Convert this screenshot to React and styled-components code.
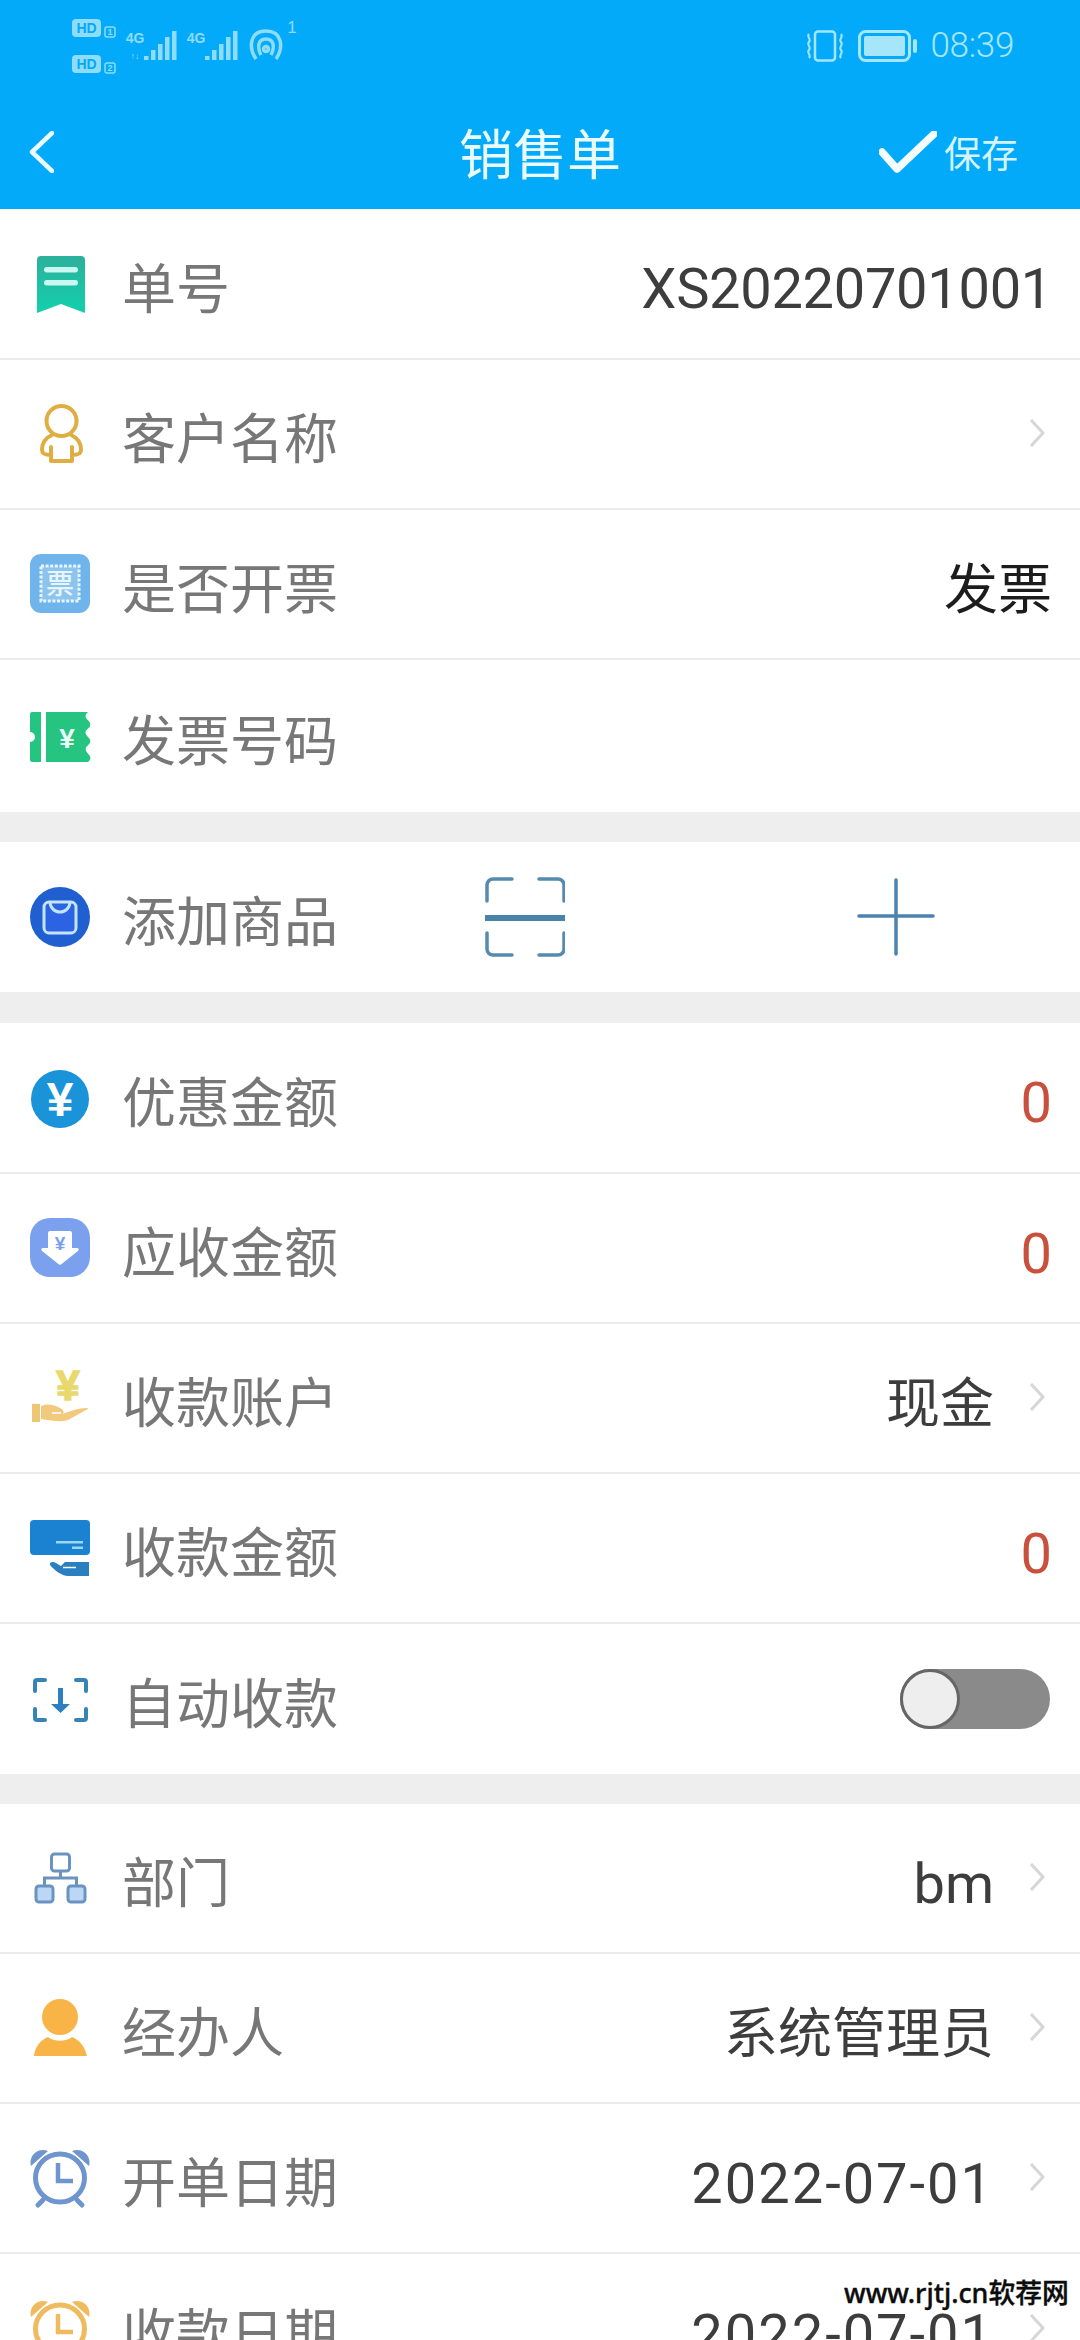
import React from 'react';
import styled, { createGlobalStyle } from 'styled-components';

const CJK = '"Noto Sans CJK SC", "Noto Sans", sans-serif';
const LATIN = 'Roboto, "Noto Sans CJK SC", sans-serif';

const Global = createGlobalStyle`
  html, body { margin: 0; padding: 0; background: #fff; }
  body { font-family: ${CJK}; }
`;

const Page = styled.div`
  position: relative;
  width: 1080px;
  height: 2340px;
  overflow: hidden;
  background: #eeeeee;
`;

const Header = styled.header`
  height: 209px;
  background: #02aaf9;
  display: flex;
  flex-direction: column;
`;

const StatusBar = styled.div`
  height: 90px;
  padding: 19px 66px 0 72px;
  box-sizing: border-box;
  display: flex;
  justify-content: space-between;
  align-items: flex-start;
`;

const StatusRight = styled.div`
  display: flex;
  align-items: center;
  gap: 12px;
  padding-top: 11px;
`;

const Clock = styled.span`
  font-family: Roboto, sans-serif;
  font-size: 35px;
  font-weight: 300;
  letter-spacing: -0.3px;
  line-height: 32px;
  color: #a5e6fa;
`;

const NavBar = styled.div`
  flex: 1;
  display: grid;
  grid-template-columns: 1fr auto 1fr;
  align-items: center;
  padding: 4px 29px 0;
`;

const Title = styled.h1`
  margin: 0;
  font-size: 54px;
  font-weight: 400;
  line-height: 64px;
  color: #e9fbff;
`;

const SaveAction = styled.div`
  justify-self: end;
  margin-right: 33px;
  display: flex;
  align-items: center;
  gap: 7px;
`;

const SaveLabel = styled.span`
  font-size: 37px;
  line-height: 44px;
  color: #d5f4fd;
`;

const Section = styled.section`
  margin-bottom: ${p => p.$gap || 30}px;
  background: #fff;
`;

const Row = styled.div`
  height: ${p => p.$h || 150}px;
  box-sizing: border-box;
  padding: 0 28px 0 30px;
  display: flex;
  align-items: center;
  background: #fff;
  border-bottom: 2px solid #ebebeb;
  &:last-child { border-bottom: none; }
`;

const IconCell = styled.span`
  flex: none;
  width: 60px;
  height: 60px;
  margin-right: 32px;
  display: block;
  svg { display: block; overflow: visible; }
`;

const Label = styled.span`
  font-size: 54px;
  line-height: 64px;
  color: #777777;
  padding-top: 4px;
`;

const Value = styled.span`
  margin-left: auto;
  font-family: ${p => (p.$latin ? LATIN : CJK)};
  font-size: ${p => (p.$latin ? 56 : 54)}px;
  letter-spacing: ${p => p.$spacing || 0}px;
  line-height: 64px;
  color: ${p => p.$color || '#3d3d3d'};
  padding-top: ${p => (p.$latin ? 11 : 4)}px;
`;

const Chevron = styled.svg`
  flex: none;
  width: 16px;
  height: 28px;
  margin-left: 35px;
  margin-right: 7px;
  margin-top: -2px;
`;

const ActionGroup = styled.div`
  margin-left: 147px;
  display: flex;
  align-items: center;
  gap: 292px;
`;

const Toggle = styled.span`
  position: relative;
  margin-left: auto;
  margin-right: 2px;
  width: 150px;
  height: 60px;
  border-radius: 30px;
  background: #8a8a8a;
`;

const Knob = styled.span`
  position: absolute;
  left: 0;
  top: 0;
  width: 60px;
  height: 60px;
  box-sizing: border-box;
  border-radius: 50%;
  border: 3px solid #666666;
  background: #eeeeee;
`;

const Watermark = styled.div`
  position: absolute;
  left: 844px;
  top: 2275px;
  font-family: "Noto Sans", "Noto Sans CJK SC", sans-serif;
  font-size: 26.8px;
  font-weight: 500;
  line-height: 36px;
  color: #0c0c0c;
  -webkit-text-stroke: 0.4px #0c0c0c;
  white-space: nowrap;
`;

const ICON_TEXT = 'Liberation Sans, Arial, sans-serif';

const Bookmark = () => (
  <svg width="60" height="60" viewBox="0 0 60 60">
    <defs>
      <linearGradient id="bm" x1="0" y1="0" x2="0" y2="1">
        <stop offset="0" stopColor="#2cb09c" />
        <stop offset="1" stopColor="#12d0ad" />
      </linearGradient>
    </defs>
    <path d="M7 6a4 4 0 0 1 4-4h40a4 4 0 0 1 4 4v53L31 50 7 59z" fill="url(#bm)" />
    <rect x="14" y="13" width="34" height="5.5" rx="2.7" fill="#c8f8f0" />
    <rect x="14" y="26" width="34" height="5.5" rx="2.7" fill="#c8f8f0" />
  </svg>
);

const UserOutline = () => (
  <svg width="60" height="60" viewBox="0 0 60 60" fill="none" stroke="#dfae42" strokeWidth="4" strokeLinejoin="round" strokeLinecap="round">
    <ellipse cx="31.500" cy="17" rx="15" ry="15" />
    <path d="M22 31C15 34 12 40 12 46c0 4 3 5 9 5M41 31c7 3 10 9 10 15 0 4-3 5-9 5M21 43v14h21V43" />
  </svg>
);

const InvoiceStamp = () => (
  <svg width="60" height="60" viewBox="0 0 60 60">
    <rect x="0" y="0" width="60" height="59" rx="11" fill="#6fb5ec" />
    <rect x="11" y="12" width="38" height="35" fill="#8cc4ee" stroke="#e6f5ff" strokeWidth="3" strokeDasharray="3 1.600" />
    <text x="30" y="40" textAnchor="middle" fontFamily={CJK} fontSize="28" fontWeight="500" fill="#e6f5ff">票</text>
  </svg>
);

const Ticket = () => (
  <svg width="60" height="60" viewBox="0 0 60 60">
    <path d="M2 6h9v50H2a2 2 0 0 1-2-2V36a5 5 0 0 0 0-10V8a2 2 0 0 1 2-2z" fill="#25c481" />
    <path d="M16 6h42q-5 4 0 8.300t0 8.300 0 8.400 0 8.300 0 8.400 0 8.300H16z" fill="#25c481" />
    <text x="37" y="42" textAnchor="middle" fontFamily={ICON_TEXT} fontSize="28" fontWeight="700" fill="#e9fff5">¥</text>
  </svg>
);

const BagCircle = () => (
  <svg width="60" height="60" viewBox="0 0 60 60">
    <circle cx="30" cy="30" r="30" fill="#1f5fd0" />
    <rect x="14" y="15" width="32" height="31" rx="5" fill="#2b63e2" stroke="#c3e4ff" strokeWidth="3" />
    <path d="M20 15a10 10 0 0 0 20 0" fill="none" stroke="#c3e4ff" strokeWidth="3" />
  </svg>
);

const YenCoin = () => (
  <svg width="60" height="60" viewBox="0 0 60 60">
    <circle cx="30" cy="31" r="29" fill="#1a93d8" />
    <text x="30" y="48" textAnchor="middle" fontFamily={ICON_TEXT} fontSize="48" fontWeight="700" fill="#fff">¥</text>
  </svg>
);

const ReceiveBadge = () => (
  <svg width="60" height="60" viewBox="0 0 60 60">
    <rect x="0" y="0" width="60" height="59" rx="20" fill="#7aa0ee" />
    <path d="M20 13h20a2 2 0 0 1 2 2v15h5c2 0 2 2 1 3L31 46.500a2 2 0 0 1-2 0L12 33c-1-1-1-3 1-3h5V15a2 2 0 0 1 2-2z" fill="#fff" />
    <text x="30" y="32" textAnchor="middle" fontFamily={ICON_TEXT} fontSize="19" fontWeight="700" fill="#7aa0ee">¥</text>
  </svg>
);

const HandYen = () => (
  <svg width="60" height="60" viewBox="0 0 60 60">
    <text x="38" y="32" textAnchor="middle" fontFamily={ICON_TEXT} fontSize="42" fontWeight="700" fill="#e9d96c" stroke="#e9d96c" strokeWidth="1.500">¥</text>
    <rect x="2" y="36" width="8" height="18" fill="#efc674" />
    <path d="M11 38c8-3 13-1 19 2 4 2 5 5 2 6l12-4c7-2 15-3 14-1L38 52c-8 3-18 0-27-1z" fill="#f1ca7e" />
    <path d="M22 45h9" stroke="#fff" strokeWidth="1.500" />
  </svg>
);

const CardHand = () => (
  <svg width="60" height="60" viewBox="0 0 60 60">
    <rect x="0" y="2" width="60" height="35" rx="4" fill="#1a82d0" />
    <rect x="26" y="23" width="27" height="2.500" fill="#9ad8f2" />
    <rect x="42" y="28.500" width="11" height="2.500" fill="#9ad8f2" />
    <path d="M20 47c-1-3 3-4 6-2l5 3 4-4h24v14H38c-6 0-14-6-18-11z" fill="#2a7fc0" />
    <path d="M33 49.500h13" stroke="#fff" strokeWidth="1.500" />
  </svg>
);

const ScanDown = () => (
  <svg width="60" height="60" viewBox="0 0 60 60">
    <g fill="none" stroke="#3584b5" strokeWidth="4" strokeLinecap="round">
      <path d="M15 11H7a2 2 0 0 0-2 2v9M46 11h8a2 2 0 0 1 2 2v9M15 51H7a2 2 0 0 1-2-2v-9M46 51h8a2 2 0 0 0 2-2v-9" />
    </g>
    <path d="M28 19h5v16h7L30.500 44 21 35h7z" fill="#2a80c0" />
  </svg>
);

const OrgChart = () => (
  <svg width="60" height="60" viewBox="0 0 60 60" stroke="#6a93bd" strokeWidth="3" fill="none">
    <rect x="21.500" y="6" width="18" height="17" rx="3" />
    <path d="M30.500 23v7M14.500 38v-8h32v8" />
    <rect x="6" y="38" width="17" height="16" rx="3" fill="#bcd6f8" />
    <rect x="38" y="38" width="17" height="16" rx="3" fill="#bcd6f8" />
  </svg>
);

const PersonSolid = () => (
  <svg width="60" height="60" viewBox="0 0 60 60" fill="#f8b446">
    <circle cx="30" cy="19" r="18" />
    <path d="M4 58c1-10 8-17 14-19 6 5 18 5 24 0 6 2 13 9 15 19z" />
  </svg>
);

const AlarmClock = ({ color }) => (
  <svg width="60" height="60" viewBox="0 0 60 60" fill="none" stroke={color}>
    <ellipse cx="30" cy="30" rx="24.500" ry="24" strokeWidth="5" />
    <path d="M1 18C-2 8 8-1 18 3z" fill={color} stroke="none" />
    <path d="M59 18C62 8 52-1 42 3z" fill={color} stroke="none" />
    <path d="M13 52l-5 5M47 52l5 5" strokeWidth="5" strokeLinecap="round" />
    <path d="M28 15v18h15" strokeWidth="4.500" />
  </svg>
);

const ScanIcon = () => (
  <svg width="80" height="80" viewBox="0 0 80 80" fill="none" stroke="#568bad" strokeWidth="3.500" strokeLinecap="round">
    <path d="M27 2H8a6 6 0 0 0-6 6v16M54 2h19a6 6 0 0 1 6 6v16M27 78H8a6 6 0 0 1-6-6V56M54 78h19a6 6 0 0 0 6-6V56" />
    <rect x="0" y="38" width="80" height="6" fill="#4a82a8" stroke="none" />
  </svg>
);

const PlusIcon = () => (
  <svg width="78" height="78" viewBox="0 0 78 78" fill="none" stroke="#4a83ad" strokeWidth="3.500" strokeLinecap="round">
    <path d="M39 2v74M2 38h74" />
  </svg>
);

const More = () => (
  <Chevron viewBox="0 0 16 28" fill="none" stroke="#d6d6d6" strokeWidth="3">
    <path d="M2 1l12 13L2 27" />
  </Chevron>
);

const StatusLeft = () => (
  <svg width="226" height="56" viewBox="72 19 226 56">
    <g fill="#8fdcf9" stroke="none">
      <rect x="72" y="19" width="29" height="18" rx="4" />
      <rect x="72" y="55" width="29" height="18" rx="4" />
      <rect x="105" y="27" width="10" height="10" rx="2" fill="none" stroke="#8fdcf9" strokeWidth="1.500" />
      <rect x="105" y="63" width="10" height="10" rx="2" fill="none" stroke="#8fdcf9" strokeWidth="1.500" />
      <rect x="144" y="56" width="4.500" height="4" />
      <rect x="151" y="50" width="4.500" height="10" />
      <rect x="158" y="44" width="4.500" height="16" />
      <rect x="165" y="37" width="4.500" height="23" />
      <rect x="172" y="31" width="4.500" height="29" />
      <rect x="205" y="56" width="4.500" height="4" />
      <rect x="212" y="50" width="4.500" height="10" />
      <rect x="219" y="44" width="4.500" height="16" />
      <rect x="226" y="37" width="4.500" height="23" />
      <rect x="233" y="31" width="4.500" height="29" />
    </g>
    <g fontFamily={ICON_TEXT} fontWeight="700" textAnchor="middle" fill="#02aaf9">
      <text x="86.500" y="33" fontSize="14">HD</text>
      <text x="86.500" y="69" fontSize="14">HD</text>
    </g>
    <g fontFamily={ICON_TEXT} textAnchor="middle" fill="#8fdcf9" fontWeight="700">
      <text x="110" y="35" fontSize="9">1</text>
      <text x="110" y="71" fontSize="9">2</text>
      <text x="135" y="43" fontSize="14">4G</text>
      <text x="196" y="43" fontSize="14">4G</text>
      <text x="135" y="59" fontSize="9" fontWeight="400">↑↓</text>
      <text x="292" y="33" fontSize="17" fontWeight="400">1</text>
    </g>
    <g fill="none" stroke="#8fdcf9" strokeWidth="3.500">
      <path d="M256 59c-8-12-6-28 10-28s18 16 10 28" />
      <path d="M261 55c-4-8-3-16 5-16s9 8 5 16" />
      <circle cx="266" cy="49" r="2.500" />
    </g>
  </svg>
);

const Vibrate = () => (
  <svg width="42" height="32" viewBox="0 0 42 32" fill="none" stroke="#a5e6fa" strokeWidth="2.500">
    <rect x="11" y="1.500" width="20" height="29" rx="3" />
    <path d="M5 4c-3 3 3 5 0 8s3 5 0 8 3 5 0 8M37 4c3 3-3 5 0 8s-3 5 0 8-3 5 0 8" strokeWidth="2" />
  </svg>
);

const Battery = () => (
  <svg width="60" height="32" viewBox="0 0 60 32">
    <rect x="1.500" y="1.500" width="50" height="29" rx="6" fill="none" stroke="#a5e6fa" strokeWidth="3" />
    <rect x="6" y="6" width="41" height="20" rx="2" fill="#a5e6fa" />
    <rect x="55" y="9" width="4" height="14" rx="2" fill="#a5e6fa" />
  </svg>
);

const BackArrow = () => (
  <svg width="25" height="42" viewBox="0 0 25 42" fill="none" stroke="#e9fbff" strokeWidth="4.500" strokeLinecap="round" strokeLinejoin="round" style={{ display: 'block' }}>
    <path d="M23 2L3 21l20 19" />
  </svg>
);

const Check = () => (
  <svg width="58" height="42" viewBox="0 0 58 42" fill="none" stroke="#f4fdff" strokeWidth="7.500" strokeLinejoin="round" strokeLinecap="round" style={{ display: 'block' }}>
    <path d="M3 21l15 17L55 3" />
  </svg>
);

const RED = '#c8503c';

export default function App() {
  return (
    <Page>
      <Global />
      <Header>
        <StatusBar>
          <StatusLeft />
          <StatusRight>
            <Vibrate />
            <Battery />
            <Clock>08:39</Clock>
          </StatusRight>
        </StatusBar>
        <NavBar>
          <BackArrow />
          <Title>销售单</Title>
          <SaveAction>
            <Check />
            <SaveLabel>保存</SaveLabel>
          </SaveAction>
        </NavBar>
      </Header>

      <Section>
        <Row $h={151}><IconCell><Bookmark /></IconCell><Label>单号</Label><Value $latin $spacing={-0.3}>XS20220701001</Value></Row>
        <Row><IconCell><UserOutline /></IconCell><Label>客户名称</Label><Value /><More /></Row>
        <Row><IconCell><InvoiceStamp /></IconCell><Label>是否开票</Label><Value $color="#1c1c1c">发票</Value></Row>
        <Row $h={152}><IconCell><Ticket /></IconCell><Label>发票号码</Label></Row>
      </Section>

      <Section $gap={31}>
        <Row>
          <IconCell><BagCircle /></IconCell>
          <Label>添加商品</Label>
          <ActionGroup>
            <ScanIcon />
            <PlusIcon />
          </ActionGroup>
        </Row>
      </Section>

      <Section>
        <Row $h={151}><IconCell><YenCoin /></IconCell><Label>优惠金额</Label><Value $latin $color={RED}>0</Value></Row>
        <Row><IconCell><ReceiveBadge /></IconCell><Label>应收金额</Label><Value $latin $color={RED}>0</Value></Row>
        <Row><IconCell><HandYen /></IconCell><Label>收款账户</Label><Value>现金</Value><More /></Row>
        <Row><IconCell><CardHand /></IconCell><Label>收款金额</Label><Value $latin $color={RED}>0</Value></Row>
        <Row><IconCell><ScanDown /></IconCell><Label>自动收款</Label><Toggle><Knob /></Toggle></Row>
      </Section>

      <Section>
        <Row><IconCell><OrgChart /></IconCell><Label>部门</Label><Value $latin>bm</Value><More /></Row>
        <Row><IconCell><PersonSolid /></IconCell><Label>经办人</Label><Value>系统管理员</Value><More /></Row>
        <Row><IconCell><AlarmClock color="#6f95cf" /></IconCell><Label>开单日期</Label><Value $latin $spacing={2}>2022-07-01</Value><More /></Row>
        <Row><IconCell><AlarmClock color="#efbb5e" /></IconCell><Label>收款日期</Label><Value $latin $spacing={2}>2022-07-01</Value><More /></Row>
      </Section>

      <Watermark>www.rjtj.cn软荐网</Watermark>
    </Page>
  );
}
